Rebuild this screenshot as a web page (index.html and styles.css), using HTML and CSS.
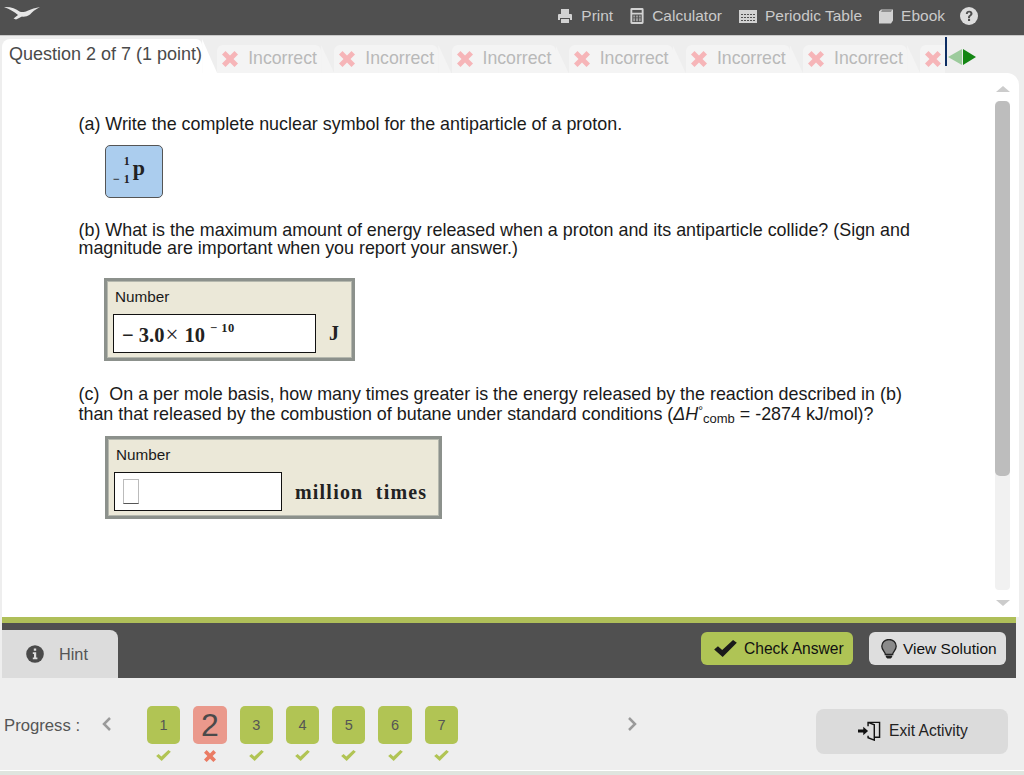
FILE: index.html
```html
<!DOCTYPE html>
<html lang="en">
<head>
<meta charset="utf-8">
<title>Question 2 of 7</title>
<link rel="stylesheet" href="styles.css">
</head>
<body>
<svg class="defs" width="0" height="0" aria-hidden="true">
  <symbol id="x" viewBox="0 0 16 16"><path d="M0 3.500 3.500 0 8 4.500 12.500 0 16 3.500 11.500 8 16 12.500 12.500 16 8 11.500 3.500 16 0 12.500 4.500 8z"/></symbol>
  <symbol id="check" viewBox="0 0 24 18"><path d="M0 10 4 6.500l4.500 4L20 0l4 3L9 18z"/></symbol>
</svg>
<header class="topbar">
  <svg class="logo" viewBox="0 0 40 20"><path d="M2 6C8 5.500 14 7.500 17.500 10.500 20 11.500 23 11 25 10 29 8 34 6.800 38 6 33 8.500 30 11 28 13.500 25 15.500 22 16 20 15.500L14 18.500 11.500 17.500 16 14C12.500 10.500 8 8.500 2 6z"/></svg>
  <nav class="tools">
    <span class="tool"><svg class="ico w16" viewBox="0 0 16 16"><path d="M4 1h8v5H4zM1 7a1 1 0 0 1 1-1h12a1 1 0 0 1 1 1v5h-2v-2H3v2H1zM4 11h8v4H4z"/></svg>Print</span>
    <span class="tool"><svg class="ico w14" viewBox="0 0 14 17"><path fill-rule="evenodd" d="M1.500 0h11A1.500 1.500 0 0 1 14 1.500v14a1.500 1.500 0 0 1-1.500 1.500h-11A1.500 1.500 0 0 1 0 15.500v-14A1.500 1.500 0 0 1 1.500 0zM2 2v3h10V2zM2 7v8h10V7z"/><path d="M3 8h2v2H3zM6 8h2v2H6zM9 8h2v2H9zM3 11h2v3H3zM6 11h2v3H6zM9 11h2v3H9z" opacity=".6"/></svg>Calculator</span>
    <span class="tool"><svg class="ico w18" viewBox="0 0 18 13"><path fill-rule="evenodd" d="M0 0h18v13H0zM2 4v1h2V4zM5 4v1h2V4zM8 4v1h2V4zM11 4v1h2V4zM14 4v1h2V4zM2 7v1h2V7zM5 7v1h2V7zM8 7v1h2V7zM11 7v1h2V7zM14 7v1h2V7zM2 10v1h2v-1zM5 10v1h2v-1zM8 10v1h2v-1zM11 10v1h2v-1zM14 10v1h2v-1z"/></svg>Periodic Table</span>
    <span class="tool"><svg class="ico w14" viewBox="0 0 14 15"><path d="M0 3 2 1h12v11l-2 3H0zM3 2 2 3h10l1-1z"/></svg>Ebook</span>
    <svg class="help" viewBox="0 0 18 18"><circle cx="9" cy="9" r="9" fill="#ddd"/><path d="M5.800 7C6 4.800 7.300 3.800 9.200 3.800c2 0 3.300 1.100 3.300 2.800 0 1.400-.8 2-1.700 2.700-.6.400-.8.800-.8 1.700H8c0-1.500.3-2.100 1.200-2.800.8-.6 1.200-.9 1.200-1.500 0-.7-.5-1.100-1.200-1.100-.8 0-1.300.5-1.400 1.400zM8 11.700h2.100v2.200H8z" fill="#505050"/></svg>
  </nav>
</header>

<div class="tabrow">
  <div class="strip">
    <div class="tab-active">Question 2 of 7 (1 point)</div>
    <div class="tab"><svg class="tabx"><use href="#x"/></svg>Incorrect</div>
    <div class="tab"><svg class="tabx"><use href="#x"/></svg>Incorrect</div>
    <div class="tab"><svg class="tabx"><use href="#x"/></svg>Incorrect</div>
    <div class="tab"><svg class="tabx"><use href="#x"/></svg>Incorrect</div>
    <div class="tab"><svg class="tabx"><use href="#x"/></svg>Incorrect</div>
    <div class="tab"><svg class="tabx"><use href="#x"/></svg>Incorrect</div>
    <div class="tab"><svg class="tabx"><use href="#x"/></svg></div>
  </div>
  <div class="tabnav">
    <span class="arrow-left"></span><span class="arrow-right"></span>
  </div>
</div>

<main class="panel">
  <section class="question">
    <p class="q q-a">(a) Write the complete nuclear symbol for the antiparticle of a proton.</p>
    <div class="symbol"><span class="stack"><span>1</span><span>&minus; 1</span></span><span class="sym-p">p</span></div>
    <p class="q q-b">(b) What is the maximum amount of energy released when a proton and its antiparticle collide? (Sign and<br>magnitude are important when you report your answer.)</p>
    <div class="answer answer-b">
      <div class="label">Number</div>
      <div class="answer-row">
        <div class="input input-b">&minus; 3.0<span class="times">&times;</span> 10<span class="exp">&minus; 10</span></div>
        <span class="unit unit-j">J</span>
      </div>
    </div>
    <p class="q q-c">(c)&nbsp; On a per mole basis, how many times greater is the energy released by the reaction described in (b)<br>than that released by the combustion of butane under standard conditions (<i>&Delta;H</i><sup>&deg;</sup><sub>comb</sub> = -2874 kJ/mol)?</p>
    <div class="answer answer-c">
      <div class="label">Number</div>
      <div class="answer-row">
        <div class="input input-c"><span class="empty"></span></div>
        <span class="unit unit-m">million&nbsp; times</span>
      </div>
    </div>
  </section>
  <aside class="scroll">
    <span class="sc-up"></span>
    <div class="sc-track"><div class="sc-thumb"></div></div>
    <span class="sc-down"></span>
  </aside>
</main>

<div class="actionbar">
  <div class="hint">
    <svg class="hint-ico" viewBox="0 0 18 18"><circle cx="9" cy="9" r="8.800" fill="#4a4a4a"/><path d="M7.800 3.500h2.400v2.200H7.800zM6.800 7.200h3.400v5.300h1.200v1.700H6.800v-1.700H8V8.900H6.800z" fill="#ddd"/></svg>
    Hint
  </div>
  <div class="actions">
    <button class="btn btn-check"><svg class="btn-tick"><use href="#check"/></svg>Check Answer</button>
    <button class="btn btn-view"><svg class="bulb" viewBox="0 0 16 20"><path d="M8 .5C3.800.5.800 3.500.800 7.300c0 3 1.900 4.500 3 6.500.3.600.5 1.200.5 1.700h7.400c0-.5.200-1.100.5-1.700 1.100-2 3-3.500 3-6.500C15.200 3.500 12.200.5 8 .5z" fill="#8a8a8a" stroke="#222" stroke-width="1.300"/><path d="M4.800 16.500h6.400v1.500l-1.500 1.500H6.300L4.800 18z" fill="#222"/></svg>View Solution</button>
  </div>
</div>

<footer class="progress">
  <span class="pr-label">Progress :</span>
  <svg class="chev chev-l" viewBox="0 0 10 14"><path d="M8 1 2 7l6 6" /></svg>
  <ol class="steps">
    <li class="step"><span class="num">1</span><svg class="mark ok"><use href="#check"/></svg></li>
    <li class="step"><span class="num current">2</span><svg class="mark bad"><use href="#x"/></svg></li>
    <li class="step"><span class="num">3</span><svg class="mark ok"><use href="#check"/></svg></li>
    <li class="step"><span class="num">4</span><svg class="mark ok"><use href="#check"/></svg></li>
    <li class="step"><span class="num">5</span><svg class="mark ok"><use href="#check"/></svg></li>
    <li class="step"><span class="num">6</span><svg class="mark ok"><use href="#check"/></svg></li>
    <li class="step"><span class="num">7</span><svg class="mark ok"><use href="#check"/></svg></li>
  </ol>
  <svg class="chev chev-r" viewBox="0 0 10 14"><path d="M2 1l6 6-6 6" /></svg>
  <button class="exit"><svg class="exit-ico" viewBox="0 0 24 20"><path d="M0 8.500h5.500V5.500l5 4.500-5 4.500v-3H0z"/><path d="M10.500 5V1h12v15.500h-5M10.500 15v2l6.500 2.500V3.500L10.500 1" fill="none" stroke="#111" stroke-width="1.500"/></svg>Exit Activity</button>
</footer>
</body>
</html>
```
FILE: styles.css
```css
* { box-sizing: border-box; }
html, body { margin: 0; height: 100%; }
body {
  width: 1024px;
  height: 775px;
  overflow: hidden;
  background: #eeeeee;
  font-family: "Liberation Sans", Arial, sans-serif;
  display: flex;
  flex-direction: column;
  color: #111;
}
.defs { position: absolute; }

/* top bar */
.topbar {
  flex: 0 0 36px;
  background: #505050;
  border-bottom: 1px solid #c9c9c9;
  display: flex;
  align-items: center;
  justify-content: space-between;
  padding: 0 46px 3px 2px;
}
.logo { width: 40px; height: 20px; fill: #e6e6e6; margin-top: -10px; }
.tools { display: flex; align-items: center; gap: 17px; color: #cacaca; font-size: 15.500px; }
.tool { display: flex; align-items: center; gap: 8px; }
.ico { fill: #d2d2d2; display: block; }
.w16 { width: 16px; height: 16px; }
.w14 { width: 14px; height: 16px; }
.w18 { width: 18px; height: 13px; }
.help { width: 18px; height: 18px; display: block; margin-left: -2px; }

/* tabs */
.tabrow { flex: 0 0 37px; display: flex; align-items: flex-start; }
.strip { width: 945px; height: 37px; overflow: hidden; display: flex; align-items: flex-end; padding-left: 2px; flex: none; }
.tab-active {
  position: relative;
  flex: 0 0 200px;
  height: 34px;
  margin-right: 15px;
  background: #fff;
  border-radius: 8px 6px 0 0;
  color: #4a4a4a;
  font-size: 18px;
  padding: 5px 0 0 7px;
  white-space: nowrap;
}
.tab-active::after {
  content: "";
  position: absolute;
  left: 100%;
  top: 0;
  width: 15px;
  height: 100%;
  background: #fff;
  clip-path: polygon(0 0, 100% 100%, 0 100%);
}
.tab {
  position: relative;
  flex: 0 0 104px;
  height: 28px;
  margin-right: 13.200px;
  background: #f4f4f4;
  border-radius: 6px 6px 0 0;
  color: #b9b9b9;
  font-size: 17.700px;
  display: flex;
  align-items: center;
  padding: 0 0 1px 5px;
  gap: 10px;
  white-space: nowrap;
}
.tab::after {
  content: "";
  position: absolute;
  left: 100%;
  top: 0;
  width: 13px;
  height: 100%;
  background: #f4f4f4;
  clip-path: polygon(0 0, 100% 100%, 0 100%);
}
.tabx { width: 16px; height: 16px; fill: #f6b5b8; flex: none; margin-top: 1px; }
.tabnav {
  height: 29px;
  margin-top: 1px;
  border-left: 2px solid #0d2d63;
  display: flex;
  align-items: center;
  padding-left: 1px;
  gap: 1px;
}
.arrow-left { width: 0; height: 0; border: 8px solid transparent; border-left: 0; border-right: 14px solid #9ccb9c; margin-top: 10px; }
.arrow-right { width: 0; height: 0; border: 8px solid transparent; border-right: 0; border-left: 13px solid #138613; margin-top: 10px; }

/* question panel */
.panel {
  flex: 0 0 544px;
  margin: 0 5px 0 2px;
  background: #fff;
  border-radius: 0 12px 0 0;
  display: flex;
}
.question { flex: 1; padding: 42px 0 0 76.500px; }
.q { margin: 0; font-size: 17.900px; color: #1a1a1a; white-space: nowrap; }
.q-a { line-height: 18px; }
.q-b { margin-top: 23px; line-height: 18px; }
.q-c { margin-top: 24px; line-height: 19.500px; }
.q sup, .q sub { line-height: 0; font-size: 13px; }
.q sub { vertical-align: -3px; }
.q sup { vertical-align: 5px; font-size: 12px; }

.symbol {
  width: 58px;
  height: 53px;
  margin: 12px 0 0 26.500px;
  background: #abcdee;
  border: 1px solid #555;
  border-radius: 5px;
  display: flex;
  align-items: flex-start;
  padding: 6px 0 0 7px;
  font-family: "Liberation Serif", serif;
  font-weight: bold;
  color: #222;
}
.stack { display: flex; flex-direction: column; align-items: flex-end; font-size: 12px; line-height: 18px; }
.stack span:last-child { white-space: nowrap; font-size: 12px; word-spacing: 1px; }
.sym-p { font-size: 22px; line-height: 26px; margin-left: 3px; margin-top: 3px; }

.answer {
  background: #ebe8d8;
  border: 3px solid #8c918c;
  outline: 1px solid #b5b8ae;
  outline-offset: -4px;
}
.answer-b { width: 251px; height: 83px; margin: 21px 0 0 25.500px; padding: 7px 6px 0 6px; }
.answer-c { width: 337px; height: 83px; margin: 12px 0 0 26.500px; padding: 7px 6px 0 6px; }
.label { font-size: 15.300px; line-height: 18px; color: #1a1a1a; padding-left: 2px; }
.answer-row { display: flex; align-items: center; margin-top: 8px; }
.input { height: 39px; background: #fff; border: 1.500px solid #111; flex: none; }
.input-b {
  width: 203px;
  font-family: "Liberation Serif", serif;
  font-weight: bold;
  font-size: 20.500px;
  line-height: 41px;
  padding-left: 8px;
  color: #222;
  white-space: nowrap;
}
.times { font-weight: normal; font-size: 23px; line-height: 0; margin: 0 1px; }
.exp { font-size: 12.500px; vertical-align: 10px; line-height: 0; margin-left: 5px; letter-spacing: .5px; }
.input-c { width: 168px; padding: 6px 0 0 8px; }
.empty { display: block; width: 16px; height: 25px; border: 1px solid #bbb; border-bottom-color: #555; }
.unit { font-family: "Liberation Serif", serif; font-weight: bold; color: #222; }
.unit-j { font-size: 20px; margin-left: 13px; }
.unit-m { font-size: 20px; margin-left: 13px; padding-top: 2px; letter-spacing: 1.200px; white-space: nowrap; }

/* scroll */
.scroll { flex: 0 0 32px; display: flex; flex-direction: column; align-items: center; padding: 13px 0 0 0; }
.sc-up { width: 0; height: 0; border: 7px solid transparent; border-top: 0; border-bottom: 6px solid #ccc; }
.sc-down { width: 0; height: 0; border: 7px solid transparent; border-bottom: 0; border-top: 6px solid #ccc; margin-top: 10px; }
.sc-track { width: 15px; height: 489px; margin-top: 9px; margin-right: 1px; background: #f1f1f1; border-radius: 4px; }
.sc-thumb { height: 375px; background: #bdbdbd; border-radius: 5px; }

/* action bar */
.actionbar {
  flex: 0 0 61px;
  margin: 0 8px 0 2px;
  background: #505050;
  border-top: 6px solid #afbf59;
  display: flex;
  justify-content: space-between;
  align-items: flex-end;
}
.hint {
  width: 116px;
  height: 48px;
  background: #dcdcdc;
  border-radius: 0 8px 0 0;
  color: #555;
  font-size: 16.300px;
  display: flex;
  align-items: center;
  padding-left: 24px;
  gap: 15px;
}
.hint-ico { width: 18px; height: 18px; flex: none; }
.actions { display: flex; gap: 16px; padding: 0 10px 13px 0; }
.btn {
  height: 33px;
  border: 0;
  border-radius: 6px;
  font-family: inherit;
  font-size: 15.600px;
  color: #111;
  display: flex;
  align-items: center;
  justify-content: flex-start;
  padding: 0;
}
.btn-check { width: 152px; background: #afc455; gap: 7px; padding-left: 13px; }
.btn-view { width: 137px; background: #dedede; gap: 6px; padding-left: 12px; font-size: 15.500px; }
.btn-tick { width: 23px; height: 17px; fill: #1a1a1a; }
.bulb { width: 16px; height: 20px; }

/* progress */
.progress {
  flex: 0 0 93px;
  display: flex;
  align-items: flex-start;
  padding-left: 4px;
  border-bottom: 1px solid #fff;
  box-shadow: 0 5px 0 #dfe5df;
}
.pr-label { font-size: 16.700px; color: #555; margin-top: 38px; white-space: nowrap; flex: 0 0 98px; }
.chev { width: 10px; height: 14px; fill: none; stroke: #9a9a9a; stroke-width: 2.500px; flex: none; margin-top: 39px; }
.steps { list-style: none; margin: 28px 0 0 35px; padding: 0; display: flex; gap: 13px; }
.step { width: 33.300px; display: flex; flex-direction: column; align-items: center; gap: 6px; }
.num {
  width: 100%;
  height: 38px;
  background: #b1c454;
  border-radius: 5px;
  color: #555;
  font-size: 14.500px;
  display: flex;
  align-items: center;
  justify-content: center;
}
.num.current { background: #ea998c; font-size: 32px; color: #4a4a4a; }
.mark { display: block; }
.mark.ok { width: 15px; height: 11px; fill: #b1c454; }
.mark.bad { width: 12px; height: 12px; fill: #ea7b63; }
.chev-r { margin-left: 169px; }
.exit {
  margin: 31px 16px 0 auto;
  width: 192px;
  height: 45px;
  border: 0;
  background: #dbdbdb;
  border-radius: 8px;
  font-family: inherit;
  font-size: 15.600px;
  color: #222;
  display: flex;
  align-items: center;
  justify-content: center;
  gap: 8px;
  padding: 0 0 2px 2px;
}
.exit-ico { width: 23px; height: 20px; fill: #111; }
```
